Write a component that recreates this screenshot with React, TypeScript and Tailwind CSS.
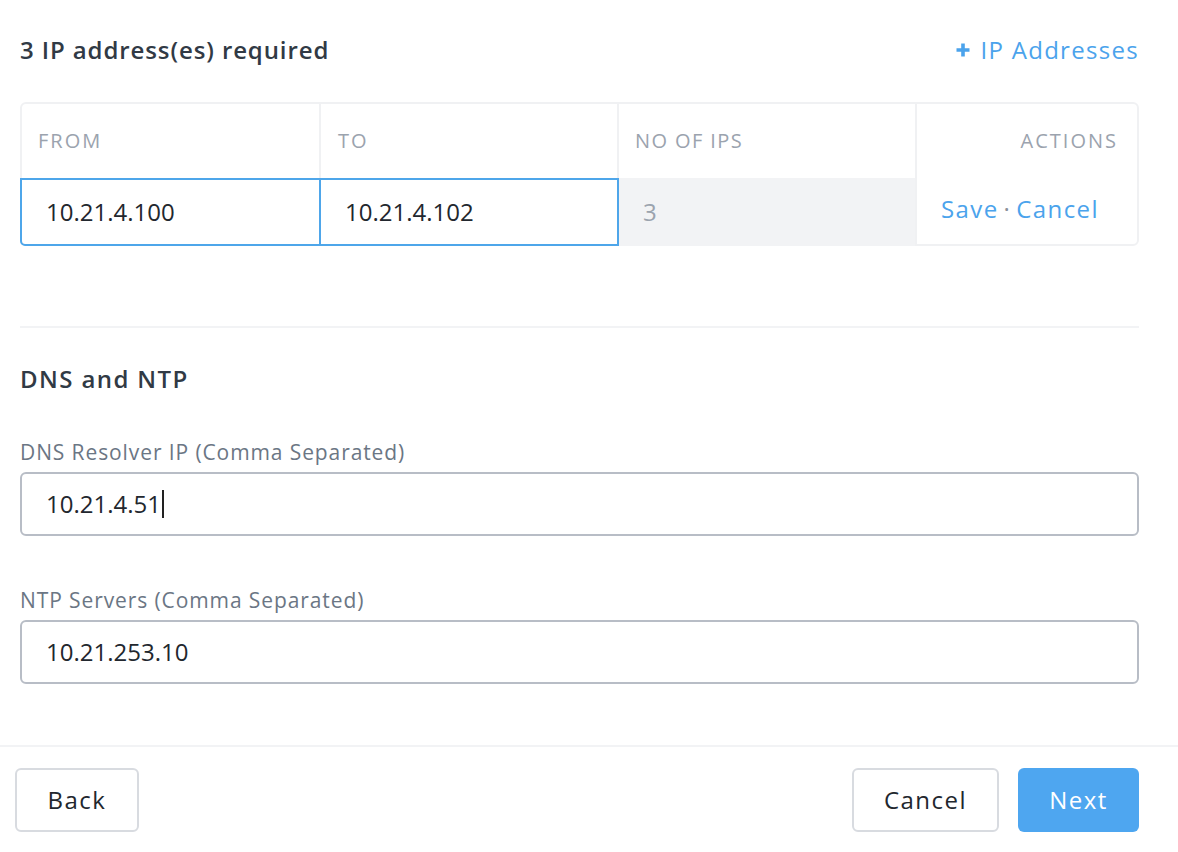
import React from "react";

export default function App() {
  const font = { fontFamily: "'Open Sans', Lato, sans-serif" };
  return (
    <div className="w-[1178px] h-[852px] bg-white flex flex-col text-[#22272e]" style={font}>
      <div className="pl-[20px] pr-[39px] flex flex-col">
        <div className="h-[102px] flex items-start justify-between pt-[34px]">
          <div className="text-[24px] leading-[32px] font-semibold tracking-[0.9px] text-[#313a45]">3 IP address(es) required</div>
          <div className="text-[24px] leading-[32px] tracking-[1.3px] text-[#4ba3ec] flex items-center">
            <svg width="16" height="16" viewBox="0 0 16 16" className="mr-[9px]">
              <path d="M8 1.5v13M1.5 8h13" stroke="#4ba3ec" strokeWidth="3.6" strokeLinecap="butt" fill="none" />
            </svg>
            IP Addresses
          </div>
        </div>
        <div className="border-2 border-[#f0f1f3] rounded-[6px] grid grid-cols-[299px_298px_298px_220px] h-[144px]">
          <div className="h-[74px] border-r-2 border-[#f0f1f3] flex items-center pl-[16px] text-[20px] tracking-[2px] text-[#9ba3ae] uppercase">From</div>
          <div className="h-[74px] border-r-2 border-[#f0f1f3] flex items-center pl-[17px] text-[20px] tracking-[2px] text-[#9ba3ae] uppercase">To</div>
          <div className="h-[74px] border-r-2 border-[#f0f1f3] flex items-center pl-[16px] text-[20px] tracking-[1.4px] text-[#9ba3ae] uppercase">No of IPs</div>
          <div className="h-[74px] flex items-center justify-end pr-[19px] text-[20px] tracking-[2px] text-[#9ba3ae] uppercase">Actions</div>
          <div className="h-[68px] border-2 border-[#4ea6ea] rounded-bl-[5px] -ml-[2px] flex items-center pl-[24px] text-[24px] text-[#22272e]">10.21.4.100</div>
          <div className="h-[68px] border-2 border-[#4ea6ea] -ml-[2px] flex items-center pl-[24px] text-[24px] text-[#22272e]">10.21.4.102</div>
          <div className="h-[68px] bg-[#f2f3f5] border-r-2 border-[#f0f1f3] flex items-center pl-[24px] text-[24px] text-[#9ba3ae]">3</div>
          <div className="h-[68px] flex items-center pl-[24px] pb-[6px] text-[24px] tracking-[1.4px] text-[#4ba3ec]">
            Save<span className="mx-[5px] text-[#8a9099]">·</span>Cancel
          </div>
        </div>
        <div className="h-[2px] bg-[#f2f3f5] mt-[80px]" />
        <div className="mt-[35px] text-[24px] leading-[32px] font-semibold tracking-[1.4px] text-[#313a45]">DNS and NTP</div>
        <div className="mt-[44px] text-[21px] leading-[26px] tracking-[0.9px] text-[#6b7684]">DNS Resolver IP (Comma Separated)</div>
        <div className="mt-[7px] h-[64px] border-2 border-[#b8bdc6] rounded-[6px] flex items-center pl-[24px] text-[24px]">
          10.21.4.51<span className="inline-block w-[2px] h-[28px] bg-[#222] ml-[1px]" />
        </div>
        <div className="mt-[51px] text-[21px] leading-[26px] tracking-[0.9px] text-[#6b7684]">NTP Servers (Comma Separated)</div>
        <div className="mt-[7px] h-[64px] border-2 border-[#b8bdc6] rounded-[6px] flex items-center pl-[24px] text-[24px]">
          10.21.253.10
        </div>
      </div>
      <div className="mt-[61px] h-[2px] bg-[#f2f3f5]" />
      <div className="pl-[15px] pr-[39px] pt-[21px] flex items-center">
        <button className="w-[124px] h-[64px] border-2 border-[#d8dbe0] rounded-[6px] text-[24px] tracking-[1.5px] text-[#22272e] bg-white">Back</button>
        <div className="flex-1" />
        <button className="w-[147px] h-[64px] border-2 border-[#d8dbe0] rounded-[6px] text-[24px] tracking-[1.5px] text-[#22272e] bg-white">Cancel</button>
        <button className="ml-[19px] w-[121px] h-[64px] rounded-[6px] text-[24px] tracking-[1.5px] text-white bg-[#4ea6f0]">Next</button>
      </div>
    </div>
  );
}
